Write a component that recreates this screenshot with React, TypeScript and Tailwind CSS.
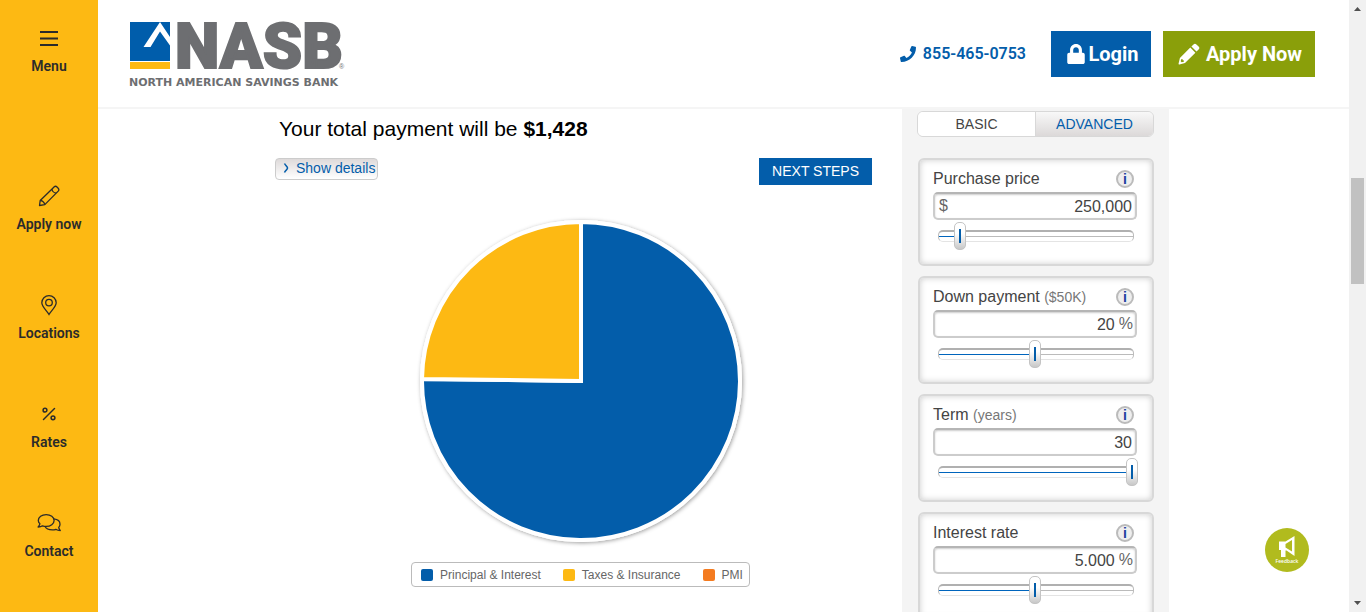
import { useState } from "react";
import type { ReactNode } from "react";
import { FaLock, FaPhone } from "react-icons/fa";

function MenuIcon() {
  return (
    <svg width="20" height="20" viewBox="0 0 20 20" fill="none" stroke="currentColor" strokeWidth="2" aria-hidden="true">
      <path d="M1 4h18M1 10.5h18M1 17h18" />
    </svg>
  );
}

function PencilIcon() {
  return (
    <svg width="22" height="22" viewBox="0 0 22 22" fill="none" stroke="currentColor" strokeWidth="1.3" strokeLinejoin="round" aria-hidden="true">
      <path d="M1.5 20.500 2.200 15.500 14.800 3.200l1.200-1.200c1-.9 2.200-.8 3 0l1.200 1.200c.8.9.8 2 0 2.900L6.800 19.600Z" />
      <path d="M13.800 4c.4 2.300 1.900 3.700 4.300 4.200M2.200 15.500c2 0 4.300 1.800 4.600 4.100" />
    </svg>
  );
}

function PinIcon() {
  return (
    <svg width="22" height="22" viewBox="0 0 22 22" fill="none" stroke="currentColor" strokeWidth="1.3" aria-hidden="true">
      <path d="M11 20.500C9 17 3.800 12.700 3.800 8.800a7.200 7.200 0 0 1 14.400 0C18.200 12.700 13 17 11 20.500Z" />
      <circle cx="11" cy="8.600" r="3.300" />
    </svg>
  );
}

function PercentIcon() {
  return (
    <svg width="14" height="14" viewBox="0 0 14 14" fill="none" stroke="currentColor" strokeWidth="1.5" aria-hidden="true">
      <path d="M12.500 1.500 1.500 12.500" strokeLinecap="round" />
      <circle cx="3" cy="3.200" r="1.900" />
      <circle cx="11" cy="10.800" r="1.900" />
    </svg>
  );
}

function ChatIcon() {
  return (
    <svg width="26" height="22" viewBox="0 0 26 22" fill="none" stroke="currentColor" strokeWidth="1.3" strokeLinejoin="round" aria-hidden="true">
      <path d="M10.200 2.600c4.400 0 7.900 2.600 7.900 5.900s-3.500 5.900-7.900 5.900c-1.300 0-2.500-.2-3.600-.6-1.200.8-2.900 1.200-4.500 1.200 1-1 1.700-1.900 1.800-3.200-1-1-1.600-2.100-1.600-3.300 0-3.300 3.500-5.900 7.900-5.900Z" />
      <path d="M17.800 6.900c3.800.4 6.200 2.500 6.200 5.300 0 1.200-.4 2.300-1.300 3.200.1 1.300.8 2.200 1.600 3.200-1.600 0-3.300-.5-4.500-1.300-1 .4-2.200.6-3.400.6-3.500 0-6.500-1.500-7.500-3.600" />
    </svg>
  );
}

function SolidPencilIcon() {
  return (
    <svg width="22" height="22" viewBox="0 0 22 22" fill="currentColor" aria-hidden="true">
      <path
        fillRule="evenodd"
        d="M12.300 4.600 17.400 9.700 7 20.100l-5.600 1.300a.6.6 0 0 1-.8-.8L1.900 15ZM3.200 16.200l-.5 2.100 1 1 2.100-.5.200-1.300-1.300-.2-.2-1.300Z"
      />
      <path d="m13.400 3.500 2.100-2.100a2 2 0 0 1 2.900 0l2.200 2.200a2 2 0 0 1 0 2.900l-2.100 2.100Z" />
    </svg>
  );
}

const navItems: { label: string; icon: ReactNode }[] = [
  { label: "Apply now", icon: <PencilIcon /> },
  { label: "Locations", icon: <PinIcon /> },
  { label: "Rates", icon: <PercentIcon /> },
  { label: "Contact", icon: <ChatIcon /> },
];

function Sidebar() {
  return (
    <aside className="flex w-[98px] shrink-0 flex-col bg-[#fdb913] pt-6 font-['Roboto',sans-serif] text-sm leading-5 font-semibold text-[#2b2b2b]">
      <button type="button" className="flex flex-col items-center gap-1">
        <span className="flex h-7 items-center">
          <MenuIcon />
        </span>
        Menu
      </button>
      <nav className="mt-[106px] flex flex-col gap-[57px]">
        {navItems.map((item) => (
          <a key={item.label} href="#" className="flex flex-col items-center gap-1">
            <span className="flex h-7 items-center">{item.icon}</span>
            {item.label}
          </a>
        ))}
      </nav>
    </aside>
  );
}

function Logo() {
  return (
    <a href="#" aria-label="NASB North American Savings Bank">
      <svg width="216" height="70" viewBox="0 0 216 70" className="overflow-visible" aria-hidden="true">
        <path d="M1 3h40v39H1z" fill="#005dab" />
        <path d="M1 43h40v7H1z" fill="#fdb913" />
        <path d="M14.500 28 31 3 41 18v8.500L31 12.500 21.500 28Z" fill="#fff" />
        <text x="46" y="49" fill="#6d6e71" stroke="#6d6e71" strokeWidth="2" className="font-['Roboto',sans-serif] text-[63px] font-black">
          NASB
        </text>
        <text x="0" y="67" fill="#6d6e71" className="font-['DejaVu_Sans',sans-serif] text-[11px] font-bold">
          NORTH AMERICAN SAVINGS BANK
        </text>
        <text x="210" y="50" fill="#6d6e71" className="font-['Liberation_Sans',sans-serif] text-[7px]">
          ®
        </text>
      </svg>
    </a>
  );
}

function Header() {
  return (
    <header className="flex h-[109px] shrink-0 items-center justify-between border-b-2 border-[#f5f5f5] pr-[34px] pl-[31px] font-['Roboto',sans-serif]">
      <Logo />
      <div className="flex items-center">
        <a href="tel:8554650753" className="mr-[25px] flex items-center gap-[7px] text-base leading-5 font-semibold text-[#035daa]">
          <FaPhone size={16} />
          855-465-0753
        </a>
        <a href="#" className="mr-3 flex h-[46px] w-[100px] items-center justify-center gap-[2px] bg-[#035daa] pl-[3px] text-xl font-bold text-white">
          <FaLock size={20} />
          Login
        </a>
        <a href="#" className="flex h-[46px] w-[152px] items-center justify-center gap-[6px] bg-[#8a9f0a] pl-[2px] text-xl font-bold text-white">
          <SolidPencilIcon />
          Apply Now
        </a>
      </div>
    </header>
  );
}

function PieChart() {
  return (
    <svg width="340" height="340" viewBox="0 0 340 340" role="img" aria-label="Payment breakdown" className="mt-[26px]">
      <defs>
        <filter id="pie-shadow" x="-10%" y="-10%" width="120%" height="120%">
          <feDropShadow dx="1" dy="1" stdDeviation="2" floodColor="#000" floodOpacity="0.4" />
        </filter>
      </defs>
      <circle cx="170" cy="170" r="161" fill="#fff" filter="url(#pie-shadow)" />
      <g stroke="#fff" strokeWidth="4">
        <path d="M170 170V11A159 159 0 1 1 11 168Z" fill="#035daa" />
        <path d="M170 170 11 168A159 159 0 0 1 170 11Z" fill="#fdb913" />
      </g>
    </svg>
  );
}

function Legend() {
  return (
    <ul className="mt-[11px] flex h-[25px] items-center gap-[22px] rounded border border-[#bbb] px-[9px] pr-[6px] text-xs text-[#666]">
      <li className="flex items-center gap-[7px]">
        <span className="size-3 rounded-xs bg-[#035daa]" />
        Principal &amp; Interest
      </li>
      <li className="flex items-center gap-[7px]">
        <span className="size-3 rounded-xs bg-[#fdb913]" />
        Taxes &amp; Insurance
      </li>
      <li className="flex items-center gap-[7px]">
        <span className="size-3 rounded-xs bg-[#f47b20]" />
        PMI
      </li>
    </ul>
  );
}

function Results() {
  return (
    <section className="flex min-w-0 flex-1 flex-col items-center">
      <h1 className="w-full pt-2 pl-1 text-[21px] leading-6 text-black">
        Your total payment will be <strong>$1,428</strong>
      </h1>
      <div className="mt-[17px] flex w-full items-start justify-between pr-[30px]">
        <button type="button" className="flex h-[22px] items-center gap-[6px] rounded border border-[#ccc] bg-linear-to-b from-[#dedada] to-white pr-[2px] pb-[2px] pl-[7px] text-sm leading-[18px] text-[#035daa]">
          <svg width="7" height="10" viewBox="0 0 7 10" fill="none" stroke="currentColor" strokeWidth="1.6" aria-hidden="true">
            <path d="M1.500.500C2.500 2.500 4.500 3.500 4.500 5S2.500 7.500 1.500 9.500" />
          </svg>
          Show details
        </button>
        <button type="button" className="h-[27px] bg-[#035daa] px-[13px] pb-[2px] text-sm leading-5 text-white">
          NEXT STEPS
        </button>
      </div>
      <div className="flex flex-col items-center pr-4">
        <PieChart />
        <Legend />
      </div>
    </section>
  );
}

type FieldProps = {
  id: string;
  label: string;
  note?: string;
  prefix?: string;
  suffix?: string;
  max: number;
  step: number;
  digits?: number;
  initial: number;
};

function Field({ id, label, note, prefix, suffix, max, step, digits = 0, initial }: FieldProps) {
  const [value, setValue] = useState(initial);
  const text = value.toLocaleString("en-US", { minimumFractionDigits: digits, maximumFractionDigits: digits });
  return (
    <div className="h-[108px] rounded-md border-2 border-[#d8d8d8] bg-white pt-2 pr-[15px] pl-[13px] shadow-[inset_0_0_6px_#ccc]">
      <div className="flex h-[22px] items-center justify-between pr-[3px]">
        <label htmlFor={id} className="text-base text-[#444]">
          {label} {note && <span className="text-sm text-[#777]">{note}</span>}
        </label>
        <button
          type="button"
          aria-label={`About ${label}`}
          className="flex size-[18px] items-center justify-center rounded-full border-2 border-[#bbb] bg-[#eee] text-sm leading-none font-bold text-[#1f3f9f]"
        >
          i
        </button>
      </div>
      <div className="mt-[2px] flex h-7 items-center rounded-[5px] border-2 border-[#ccc] border-t-[#b5b5b5] bg-white pr-[2px] pl-1 shadow-[inset_0_1px_2px_#ccc]">
        {prefix && <span className="text-base text-[#666]">{prefix}</span>}
        <input
          id={id}
          type="text"
          value={text}
          onChange={(e) => setValue(Number(e.target.value.replace(/[^\d.]/g, "")) || 0)}
          className="w-0 min-w-0 flex-1 bg-transparent pt-px pr-px text-right text-base text-[#444] outline-none"
        />
        {suffix && <span className="pl-[3px] text-base text-[#666]">{suffix}</span>}
      </div>
      <div className="relative mt-[2px] h-7">
        <div className="mr-[3px] ml-[5px] h-full pt-2">
          <div className="flex h-3 items-center rounded-[5px] border border-x-[#bbb] border-t-2 border-t-[#b0b0b0] border-b-[#e4e4e4]">
            <div className="h-px w-full bg-[#bbb]">
              <div className="h-px bg-[#0065bd]" style={{ width: `${(value / max) * 100}%` }} />
            </div>
          </div>
        </div>
        <input
          type="range"
          aria-label={`${label} slider`}
          min={0}
          max={max}
          step={step}
          value={value}
          onChange={(e) => setValue(Number(e.target.value))}
          className="absolute inset-y-0 -left-px w-[calc(100%+2px)] appearance-none bg-transparent [&::-webkit-slider-thumb]:h-7 [&::-webkit-slider-thumb]:w-3 [&::-webkit-slider-thumb]:appearance-none [&::-webkit-slider-thumb]:rounded-[5px] [&::-webkit-slider-thumb]:border [&::-webkit-slider-thumb]:border-[#c4c4c4] [&::-webkit-slider-thumb]:bg-[linear-gradient(#035daa,#035daa),linear-gradient(#fff_40%,#c8c8c8)] [&::-webkit-slider-thumb]:bg-[length:2px_14px,100%_100%] [&::-webkit-slider-thumb]:bg-center [&::-webkit-slider-thumb]:bg-no-repeat"
        />
      </div>
    </div>
  );
}

function Controls() {
  return (
    <section className="w-[267px] shrink-0 bg-[#f4f4f4] px-[15px] pt-[2px]">
      <div className="flex h-[26px] overflow-hidden rounded-md border border-[#d8d8d8] text-sm">
        <button type="button" className="flex-1 bg-white text-[#444]">
          BASIC
        </button>
        <button type="button" className="flex-1 border-l border-[#d8d8d8] bg-linear-to-b from-[#f8f8f8] to-[#dcd9d9] text-[#035daa]">
          ADVANCED
        </button>
      </div>
      <div className="mt-[21px] ml-px flex flex-col gap-[10px]">
        <Field id="price" label="Purchase price" prefix="$" max={2200000} step={1000} initial={250000} />
        <Field id="down" label="Down payment" note="($50K)" suffix="%" max={40} step={1} initial={20} />
        <Field id="term" label="Term" note="(years)" max={30} step={1} initial={30} />
        <Field id="rate" label="Interest rate" suffix="%" max={10} step={0.125} digits={3} initial={5} />
      </div>
    </section>
  );
}

function Feedback() {
  return (
    <button
      type="button"
      className="fixed right-[57px] bottom-10 flex size-11 flex-col items-center justify-center rounded-full bg-[#b1bb1e] text-white"
    >
      <svg width="18" height="22" viewBox="0 0 18 22" fill="none" stroke="currentColor" aria-hidden="true">
        <path d="M1 5.500h6.500L16.500 0v20l-8-5.500H7.500V21H3v-7H1Z" fill="currentColor" stroke="none" />
        <path d="M7.500 8 14 4v11.500l-6.500-4Z" fill="#b1bb1e" stroke="none" />
      </svg>
      <span className="font-['Open_Sans',sans-serif] text-[5px] leading-[6px] font-semibold">Feedback</span>
    </button>
  );
}

function ScrollRail() {
  return (
    <div className="flex w-[17px] shrink-0 flex-col items-center bg-[#f1f1f1]" aria-hidden="true">
      <svg width="17" height="17" viewBox="0 0 17 17" fill="#505050">
        <path d="M8.500 7 12 11H5Z" />
      </svg>
      <div className="mt-[161px] h-[106px] w-[13px] bg-[#c1c1c1]" />
      <svg width="17" height="17" viewBox="0 0 17 17" fill="#505050" className="mt-auto">
        <path d="M5 6h7L8.500 10Z" />
      </svg>
    </div>
  );
}

export default function App() {
  return (
    <div className="flex h-screen overflow-hidden bg-white font-['Liberation_Sans',Arial,sans-serif]">
      <Sidebar />
      <div className="flex min-w-0 flex-1 flex-col">
        <Header />
        <main className="min-h-0 flex-1 overflow-hidden pr-[3px]">
          <div className="mx-auto flex max-w-[894px]">
            <Results />
            <Controls />
          </div>
        </main>
      </div>
      <ScrollRail />
      <Feedback />
    </div>
  );
}
